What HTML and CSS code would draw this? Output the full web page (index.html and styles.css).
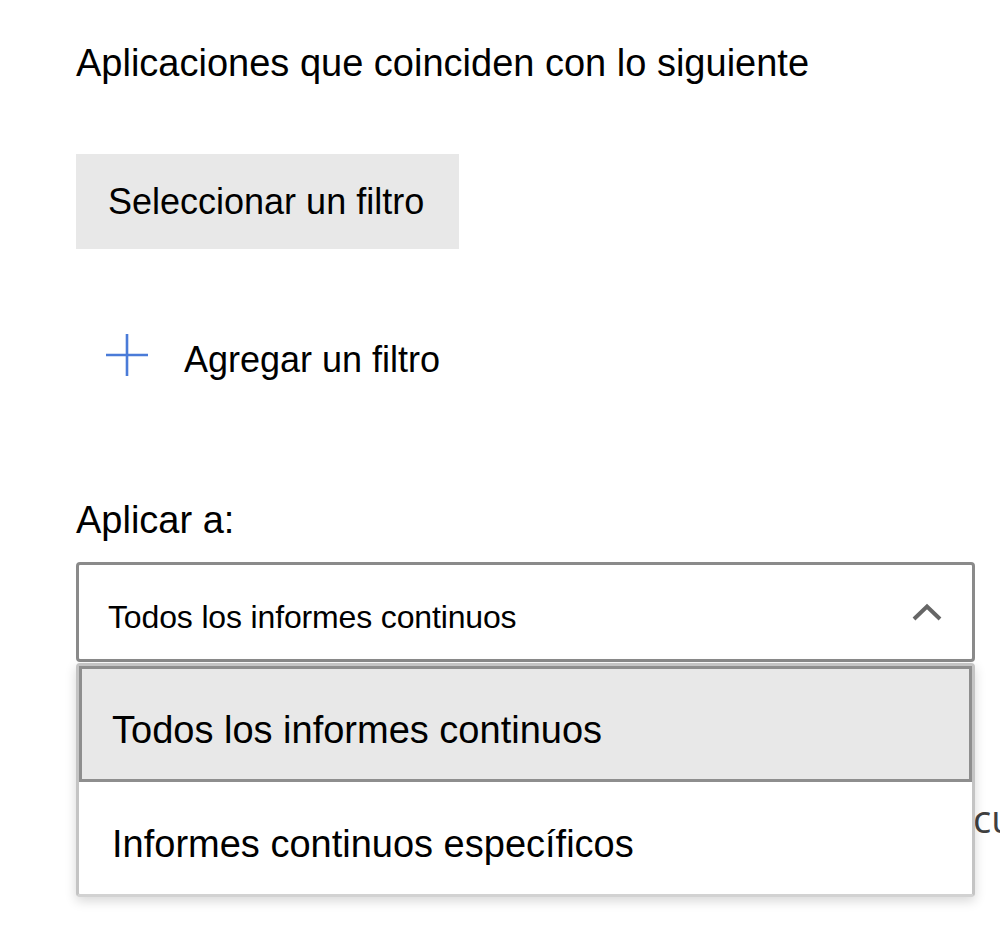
FILE: index.html
```html
<!DOCTYPE html>
<html lang="es">
<head>
<meta charset="utf-8">
<title>Aplicaciones que coinciden</title>
<link rel="stylesheet" href="styles.css">
</head>
<body>
<main class="page">
  <h1 class="title">Aplicaciones que coinciden con lo siguiente</h1>

  <div class="filter-btn">Seleccionar un filtro</div>

  <div class="add-row">
    <svg class="plus" width="42" height="42" viewBox="0 0 42 42" aria-hidden="true">
      <path d="M21 0V42M0 21H42" stroke="#4a7bd8" stroke-width="2.6" fill="none"/>
    </svg>
    <span class="add-text">Agregar un filtro</span>
  </div>

  <div class="apply-label">Aplicar a:</div>

  <div class="select-wrap">
    <div class="select">
      <span class="select-text">Todos los informes continuos</span>
      <svg class="chevron" width="30" height="20" viewBox="0 0 30 20" aria-hidden="true">
        <polyline points="2,17 15,4.5 28,17" stroke="#666" stroke-width="4" fill="none"/>
      </svg>
    </div>
    <ul class="menu">
      <li class="option option-selected">Todos los informes continuos</li>
      <li class="option">Informes continuos específicos</li>
    </ul>
  </div>

  <p class="behind">cumplen los criterios</p>
</main>
</body>
</html>
```

FILE: styles.css
```css
html, body {
  margin: 0;
  padding: 0;
  background: #ffffff;
}

body {
  font-family: "Liberation Sans", Arial, sans-serif;
  color: #000;
}

.page {
  box-sizing: border-box;
  min-height: 938px;
  padding: 41px 0 0 76px;
}

.title {
  margin: 0;
  font-size: 38px;
  line-height: 44px;
  font-weight: normal;
}

.filter-btn {
  margin-top: 69px;
  width: fit-content;
  height: 95px;
  line-height: 95px;
  padding: 0 35px 0 32px;
  background: #e8e8e8;
  font-size: 36px;
  box-sizing: border-box;
}

.add-row {
  margin-top: 85px;
  margin-left: 30px;
  display: flex;
  align-items: flex-start;
  gap: 36px;
}

.plus {
  display: block;
  flex: none;
}

.add-text {
  margin-top: 4.5px;
  font-size: 36px;
  line-height: 42px;
}

.apply-label {
  margin-top: 117.5px;
  font-size: 38px;
  line-height: 44px;
}

.select-wrap {
  position: relative;
  margin-top: 20px;
  width: 899px;
}

.select {
  box-sizing: border-box;
  height: 100px;
  border: 3px solid #8a8a8a;
  border-radius: 4px;
  background: #fff;
  display: flex;
  align-items: center;
  justify-content: space-between;
  padding: 0 30px 0 29px;
}

.select-text {
  padding-top: 10px;
  font-size: 32px;
  line-height: 40px;
  letter-spacing: -0.15px;
}

.chevron {
  display: block;
  flex: none;
}

.menu {
  position: absolute;
  z-index: 2;
  top: calc(100% + 1px);
  left: 0;
  right: 0;
  margin: 0;
  padding: 0;
  list-style: none;
  background: #fff;
  border: 3px solid #c4c4c4;
  border-bottom-color: #d2d2d2;
  border-radius: 4px;
  box-shadow: 0 4px 12px rgba(0, 0, 0, 0.16);
}

.option {
  font-size: 38px;
  line-height: 44px;
  padding: 40px 0 28px 33px;
}

.option-selected {
  background: #e8e8e8;
  border: 3px solid #8e8e8e;
  padding: 39px 0 27px 30px;
}

.behind {
  margin: 130px 0 0 0;
  padding-left: 897px;
  overflow: hidden;
  font-family: "Open Sans", sans-serif;
  font-size: 38px;
  line-height: 52px;
  color: #404040;
  white-space: nowrap;
}
```
